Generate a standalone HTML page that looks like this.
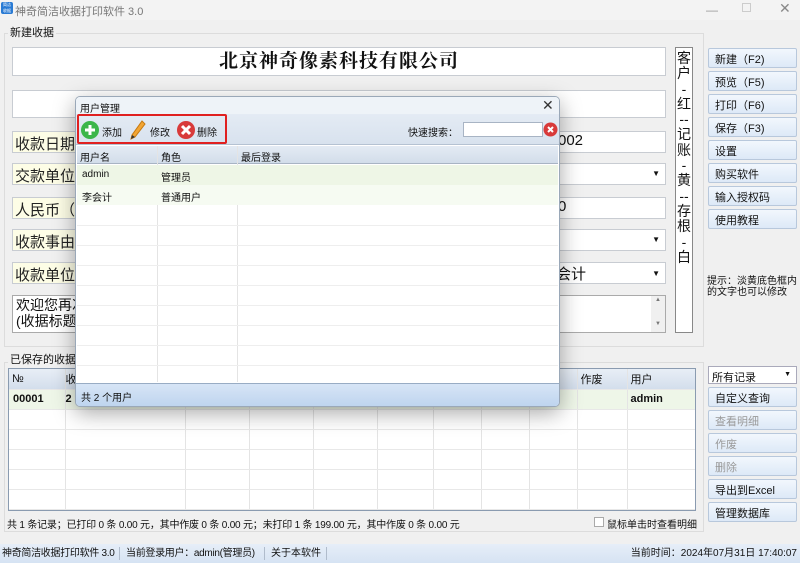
<!DOCTYPE html>
<html><head><meta charset="utf-8"><style>
*{box-sizing:border-box;margin:0;padding:0}
body{width:800px;height:563px;overflow:hidden;background:#f0f0f0;font-family:"Liberation Sans","Noto Sans CJK SC",sans-serif;font-size:11px;color:#111;position:relative}
.a{position:absolute}
.box{position:absolute;background:#fff;border:1px solid #c8ccd2}
.lbl{position:absolute;background:#fdfde6;border:1px solid #c8ccd2;font-size:15px;padding:1px 2px;color:#222;white-space:nowrap;overflow:hidden}
.btn{position:absolute;left:708px;width:89px;height:20px;border:1px solid #b8c8dc;background:linear-gradient(#f2f7fd,#dde9f7);border-radius:2px;padding:2px 6px;font-size:11px}
.dis{color:#999}
.grid td{border-right:1px solid #e4e4e4;border-bottom:1px solid #e8e8e8}
</style></head><body>
<div class="a" style="left:0;top:0;width:800px;height:20px;background:#f3f3f3"></div>
<div class="a" style="left:1px;top:2px;width:12px;height:12px;background:#2a7bd4;border-radius:2px;font-size:4px;color:#fff;line-height:6px;text-align:center">简洁<br>收据</div>
<div class="a" style="left:15px;top:3px;color:#777;font-size:11px">神奇简洁收据打印软件 3.0</div>
<div class="a" style="left:706px;top:3px;color:#999;font-size:12px">—</div>
<div class="a" style="left:742px;top:3px;width:9px;height:9px;border:1px solid #ccc"></div>
<div class="a" style="left:779px;top:0px;color:#888;font-size:14px">✕</div>

<div class="a" style="left:4px;top:33px;width:700px;height:314px;border:1px solid #dcdcdc"></div>
<div class="a" style="left:8px;top:24px;background:#f0f0f0;padding:0 2px;font-size:11px">新建收据</div>
<div class="box" style="left:12px;top:47px;width:654px;height:29px;text-align:center;font-family:'Liberation Serif','Noto Serif CJK SC',serif;font-weight:bold;font-size:19px;line-height:27px;letter-spacing:1px">北京神奇像素科技有限公司</div>
<div class="box" style="left:12px;top:90px;width:654px;height:28px"></div>

<div class="box" style="left:12px;top:131px;width:654px;height:22px;font-size:15px;padding-left:545px">002</div>
<div class="lbl" style="left:12px;top:131px;width:64px;height:22px">收款日期：</div>
<div class="box" style="left:12px;top:163px;width:654px;height:22px;text-align:right;padding-right:5px;font-size:8px;line-height:20px">▼</div>
<div class="lbl" style="left:12px;top:163px;width:64px;height:22px">交款单位：</div>
<div class="box" style="left:12px;top:197px;width:654px;height:22px;font-size:15px;padding-left:545px">0</div>
<div class="lbl" style="left:12px;top:197px;width:64px;height:22px">人民币（大</div>
<div class="box" style="left:12px;top:229px;width:654px;height:22px;text-align:right;padding-right:5px;font-size:8px;line-height:20px">▼</div>
<div class="lbl" style="left:12px;top:229px;width:64px;height:22px">收款事由：</div>
<div class="box" style="left:12px;top:262px;width:654px;height:22px;font-size:15px;padding-left:543px">会计<span style="position:absolute;right:5px;top:6px;font-size:8px">▼</span></div>
<div class="lbl" style="left:12px;top:262px;width:64px;height:22px">收款单位（</div>
<div class="box" style="left:12px;top:295px;width:654px;height:38px;font-size:14px;line-height:16px;padding:1px 3px;border-color:#aaa">欢迎您再次<br>(收据标题、<div class="a" style="right:0;top:0;width:14px;height:36px;background:#f0f0f0;font-size:6px;color:#777;text-align:center;line-height:8px">▲<br><br><br>▼</div></div>

<div class="box" style="left:675px;top:47px;width:18px;height:286px;font-size:14px;line-height:15.3px;text-align:center;border-color:#888;padding-top:3px">客<br>户<br>-<br>红<br>--<br>记<br>账<br>-<br>黄<br>--<br>存<br>根<br>-<br>白</div>

<div class="btn" style="top:48px">新建（F2)</div>
<div class="btn" style="top:71px">预览（F5)</div>
<div class="btn" style="top:94px">打印（F6)</div>
<div class="btn" style="top:117px">保存（F3)</div>
<div class="btn" style="top:140px">设置</div>
<div class="btn" style="top:163px">购买软件</div>
<div class="btn" style="top:186px">输入授权码</div>
<div class="btn" style="top:209px">使用教程</div>
<div class="a" style="left:707px;top:276px;font-size:10px;line-height:11px">提示：淡黄底色框内<br>的文字也可以修改</div>

<div class="a" style="left:4px;top:362px;width:700px;height:170px;border:1px solid #dcdcdc"></div>
<div class="a" style="left:8px;top:351px;background:#f0f0f0;padding:0 2px">已保存的收据</div>
<div class="a" style="left:8px;top:368px;width:688px;height:143px;background:#fff;border:1px solid #8a9bb0;overflow:hidden">
<table class="grid" style="border-collapse:collapse;width:688px;table-layout:fixed;font-size:11px">
<colgroup><col style="width:56px"><col style="width:120px"><col style="width:64px"><col style="width:64px"><col style="width:64px"><col style="width:56px"><col style="width:48px"><col style="width:48px"><col style="width:48px"><col style="width:50px"><col></colgroup>
<tr style="height:20px;background:linear-gradient(#e8eef6,#d3deec)"><td style="padding-left:3px">№</td><td>收</td><td></td><td></td><td></td><td></td><td></td><td></td><td></td><td style="padding-left:3px">作废</td><td style="padding-left:3px">用户</td></tr>
<tr style="height:20px;background:#eef6e8;font-weight:bold"><td style="padding-left:4px">00001</td><td>2</td><td></td><td></td><td></td><td></td><td></td><td></td><td></td><td></td><td style="padding-left:3px">admin</td></tr>
<tr style="height:20px"><td></td><td></td><td></td><td></td><td></td><td></td><td></td><td></td><td></td><td></td><td></td></tr>
<tr style="height:20px"><td></td><td></td><td></td><td></td><td></td><td></td><td></td><td></td><td></td><td></td><td></td></tr>
<tr style="height:20px"><td></td><td></td><td></td><td></td><td></td><td></td><td></td><td></td><td></td><td></td><td></td></tr>
<tr style="height:20px"><td></td><td></td><td></td><td></td><td></td><td></td><td></td><td></td><td></td><td></td><td></td></tr>
<tr style="height:20px"><td></td><td></td><td></td><td></td><td></td><td></td><td></td><td></td><td></td><td></td><td></td></tr>
</table></div>
<div class="a" style="left:7px;top:516px;font-size:10px;letter-spacing:-0.2px">共 1 条记录；已打印 0 条 0.00 元，其中作废 0 条 0.00 元；未打印 1 条 199.00 元，其中作废 0 条 0.00 元</div>
<div class="a" style="left:594px;top:517px;width:10px;height:10px;border:1px solid #aaa;background:#fff"></div>
<div class="a" style="left:607px;top:516px;font-size:10px">鼠标单击时查看明细</div>

<div class="a" style="left:708px;top:366px;width:89px;height:18px;background:#fff;border:1px solid #aab;padding:2px 3px">所有记录<span style="position:absolute;right:5px;top:4px;font-size:7px">▼</span></div>
<div class="btn" style="top:387px">自定义查询</div>
<div class="btn dis" style="top:410px">查看明细</div>
<div class="btn dis" style="top:433px">作废</div>
<div class="btn dis" style="top:456px">删除</div>
<div class="btn" style="top:479px">导出到Excel</div>
<div class="btn" style="top:502px">管理数据库</div>

<div class="a" style="left:0;top:544px;width:800px;height:19px;background:linear-gradient(#e6eef8,#d6e3f3);font-size:10px;line-height:19px;white-space:nowrap">
<span class="a" style="left:2px;letter-spacing:-0.3px">神奇简洁收据打印软件 3.0</span>
<span class="a" style="left:119px;top:3px;height:13px;border-left:1px solid #b0bccc"></span>
<span class="a" style="left:126px;letter-spacing:-0.3px">当前登录用户：admin(管理员)</span>
<span class="a" style="left:264px;top:3px;height:13px;border-left:1px solid #b0bccc"></span>
<span class="a" style="left:271px">关于本软件</span>
<span class="a" style="left:326px;top:3px;height:13px;border-left:1px solid #b0bccc"></span>
<span class="a" style="right:3px">当前时间：2024年07月31日 17:40:07</span></div>

<div class="a" style="left:75px;top:96px;width:485px;height:311px;background:#fff;border:1px solid #9aa8b8;border-radius:5px;box-shadow:0 6px 22px rgba(0,0,0,.35);overflow:hidden">
<div class="a" style="left:0;top:0;width:485px;height:17px;background:#eef3f8"></div>
<div class="a" style="left:4px;top:3px;font-size:10px">用户管理</div>
<div class="a" style="left:466px;top:0px;font-size:14px;color:#333">✕</div>
<div class="a" style="left:0;top:17px;width:485px;height:31px;background:linear-gradient(#e4ebf4,#d8e2ee);border-bottom:1px solid #b5c2d2"></div>
<div class="a" style="left:1px;top:17px;width:150px;height:30px;border:2px solid #e02020;border-radius:2px"></div>
<svg class="a" style="left:4px;top:23px" width="20" height="20"><circle cx="10" cy="10" r="9" fill="#3cb64a"/><path d="M10 5v10M5 10h10" stroke="#fff" stroke-width="3"/></svg>
<div class="a" style="left:26px;top:27px;font-size:10px">添加</div>
<svg class="a" style="left:52px;top:22px" width="18" height="22"><path d="M14 2l3 3-10 13-4 2 1-4z" fill="#f2a533" stroke="#c67a10"/><path d="M3 20l1-4 3 2z" fill="#333"/></svg>
<div class="a" style="left:74px;top:27px;font-size:10px">修改</div>
<svg class="a" style="left:100px;top:23px" width="20" height="20"><circle cx="10" cy="10" r="9" fill="#d83a3a"/><path d="M6 6l8 8M14 6l-8 8" stroke="#fff" stroke-width="3"/></svg>
<div class="a" style="left:121px;top:27px;font-size:10px">删除</div>
<div class="a" style="left:332px;top:27px;font-size:10px">快速搜索：</div>
<div class="a" style="left:387px;top:25px;width:80px;height:15px;background:#fff;border:1px solid #a8b4c4"></div>
<svg class="a" style="left:467px;top:25px" width="15" height="15"><circle cx="7.5" cy="7.5" r="7" fill="#d83a3a"/><path d="M5 5l5 5M10 5l-5 5" stroke="#fff" stroke-width="2"/></svg>
<div class="a" style="left:1px;top:49px;width:481px;height:18px;background:linear-gradient(#e4ebf4,#d2ddea);border-bottom:1px solid #a8b4c4"></div>
<div class="a" style="left:4px;top:52px;font-size:10px">用户名</div>
<div class="a" style="left:81px;top:49px;height:236px;border-left:1px solid #e4e4e4"></div>
<div class="a" style="left:161px;top:49px;height:236px;border-left:1px solid #e4e4e4"></div>
<div class="a" style="left:85px;top:52px;font-size:10px">角色</div>
<div class="a" style="left:165px;top:52px;font-size:10px">最后登录</div>
<div class="a" style="left:1px;top:68px;width:481px;height:20px;background:#eef6e6"></div>
<div class="a" style="left:1px;top:88px;width:481px;height:20px;background:#f6fbf2"></div>
<div class="a" style="left:6px;top:72px;font-size:10px">admin</div><div class="a" style="left:85px;top:72px;font-size:10px">管理员</div>
<div class="a" style="left:6px;top:92px;font-size:10px">李会计</div><div class="a" style="left:85px;top:92px;font-size:10px">普通用户</div>
<div class="a" style="left:1px;top:128px;width:481px;border-top:1px solid #eee"></div>
<div class="a" style="left:1px;top:148px;width:481px;border-top:1px solid #eee"></div>
<div class="a" style="left:1px;top:168px;width:481px;border-top:1px solid #eee"></div>
<div class="a" style="left:1px;top:188px;width:481px;border-top:1px solid #eee"></div>
<div class="a" style="left:1px;top:208px;width:481px;border-top:1px solid #eee"></div>
<div class="a" style="left:1px;top:228px;width:481px;border-top:1px solid #eee"></div>
<div class="a" style="left:1px;top:248px;width:481px;border-top:1px solid #eee"></div>
<div class="a" style="left:1px;top:268px;width:481px;border-top:1px solid #eee"></div>
<div class="a" style="left:0;top:286px;width:485px;height:25px;background:linear-gradient(#d7e5f6,#bcd3ee);border-top:1px solid #98acc4"></div>
<div class="a" style="left:5px;top:292px;font-size:10px">共 2 个用户</div>
</div>
</body></html>
